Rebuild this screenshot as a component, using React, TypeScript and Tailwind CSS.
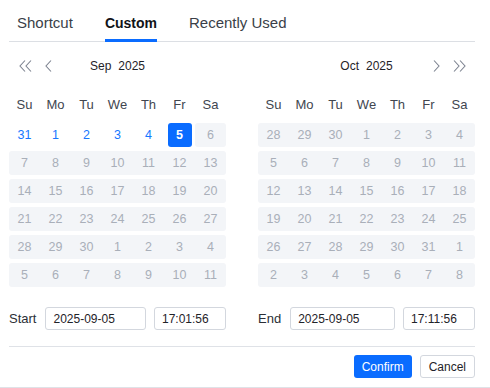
import React from 'react'

type Day = { n: number; disabled: boolean; selected?: boolean }

const sep: Day[][] = [
    [31, 1, 2, 3, 4, 5, 6],
    [7, 8, 9, 10, 11, 12, 13],
    [14, 15, 16, 17, 18, 19, 20],
    [21, 22, 23, 24, 25, 26, 27],
    [28, 29, 30, 1, 2, 3, 4],
    [5, 6, 7, 8, 9, 10, 11],
].map((row, r) => row.map((n, c) => ({ n, disabled: !(r === 0 && c < 6), selected: r === 0 && c === 5 })))

const oct: Day[][] = [
    [28, 29, 30, 1, 2, 3, 4],
    [5, 6, 7, 8, 9, 10, 11],
    [12, 13, 14, 15, 16, 17, 18],
    [19, 20, 21, 22, 23, 24, 25],
    [26, 27, 28, 29, 30, 31, 1],
    [2, 3, 4, 5, 6, 7, 8],
].map((row) => row.map((n) => ({ n, disabled: true })))

const weekdays = ['Su', 'Mo', 'Tu', 'We', 'Th', 'Fr', 'Sa']

function DoubleLeft() {
    return (
        <svg width="13" height="12" viewBox="0 0 13 12" fill="none" stroke="#7d8390" strokeWidth="1.1">
            <path d="M6 0.5L1 6l5 5.5M12 0.5L7 6l5 5.5" />
        </svg>
    )
}

function SingleLeft() {
    return (
        <svg width="7" height="12" viewBox="0 0 7 12" fill="none" stroke="#7d8390" strokeWidth="1.1">
            <path d="M6 0.5L1 6l5 5.5" />
        </svg>
    )
}

function SingleRight() {
    return (
        <svg width="7" height="12" viewBox="0 0 7 12" fill="none" stroke="#7d8390" strokeWidth="1.1">
            <path d="M1 0.5L6 6l-5 5.5" />
        </svg>
    )
}

function DoubleRight() {
    return (
        <svg width="13" height="12" viewBox="0 0 13 12" fill="none" stroke="#7d8390" strokeWidth="1.1">
            <path d="M1 0.5L6 6l-5 5.5M7 0.5L12 6l-5 5.5" />
        </svg>
    )
}

function Calendar({ month, rows, side }: { month: string; rows: Day[][]; side: 'left' | 'right' }) {
    return (
        <div className="w-[217px]">
            <div className="mt-[12px] h-6 grid grid-cols-[1fr_auto_1fr] items-center px-[6px]">
                <div className="flex items-center gap-[3px]">
                    {side === 'left' && (
                        <>
                            <button className="w-5 h-6 flex items-center justify-center"><DoubleLeft /></button>
                            <button className="w-5 h-6 flex items-center justify-center"><SingleLeft /></button>
                        </>
                    )}
                </div>
                <div className="flex gap-[7px] text-[12px] text-[#1f2329]">
                    <span>{month}</span>
                    <span>2025</span>
                </div>
                <div className="flex items-center justify-end gap-[3px]">
                    {side === 'right' && (
                        <>
                            <button className="w-5 h-6 flex items-center justify-center"><SingleRight /></button>
                            <button className="w-5 h-6 flex items-center justify-center"><DoubleRight /></button>
                        </>
                    )}
                </div>
            </div>

            <div className="mt-[15px] h-6 flex text-[13px] text-[#41464f]">
                {weekdays.map((w) => (
                    <div key={w} className="w-[31px] flex items-center justify-center">{w}</div>
                ))}
            </div>

            <div className="mt-[6px] flex flex-col gap-1">
                {rows.map((row, r) => (
                    <div key={r} className="flex h-6 text-[12.5px]">
                        {row.map((d, c) => {
                            const prev = c > 0 && row[c - 1].disabled
                            const next = c < 6 && row[c + 1].disabled
                            if (d.disabled) {
                                return (
                                    <div
                                        key={c}
                                        className={
                                            'w-[31px] flex items-center justify-center bg-[#f3f5f8] text-[#a9afb9] ' +
                                            (prev ? '' : 'rounded-l-[3px] ') +
                                            (next ? '' : 'rounded-r-[3px]')
                                        }
                                    >
                                        {d.n}
                                    </div>
                                )
                            }
                            return (
                                <div key={c} className="w-[31px] flex items-center justify-center">
                                    {d.selected ? (
                                        <span className="w-6 h-6 rounded-[3px] bg-[#0a6cff] text-white font-bold flex items-center justify-center">{d.n}</span>
                                    ) : (
                                        <span className="text-[#1677ff]">{d.n}</span>
                                    )}
                                </div>
                            )
                        })}
                    </div>
                ))}
            </div>
        </div>
    )
}

function TimeRow({ label, date, time }: { label: string; date: string; time: string }) {
    return (
        <div className="w-[217px] flex items-center">
            <span className="text-[13px] text-[#2b2f36] mr-[9px]">{label}</span>
            <div className="flex-1 h-[23px] border border-[#d3d7de] rounded-[3px] pl-[7px] flex items-center text-[12px] text-[#1f2329]">
                {date}
            </div>
            <div className="ml-2 w-[72px] h-[23px] border border-[#d3d7de] rounded-[3px] pl-[7px] flex items-center text-[12px] text-[#1f2329]">
                {time}
            </div>
        </div>
    )
}

export default function App() {
    return (
        <div className="w-[490px] h-[388px] bg-white border-b border-[#dfe2e7] overflow-hidden" style={{ fontFamily: '"Liberation Sans", Arial, sans-serif' }}>
            <div className="ml-[9px] w-[466px]">
                <div className="h-[42px] border-b border-[#dcdfe4] flex gap-8 pl-2 text-[15px]">
                    <div className="pt-[13px] leading-5 text-[#3a3f48]">Shortcut</div>
                    <div className="relative pt-[13px] leading-5 text-[14px] font-bold text-[#111318]">
                        Custom
                        <span className="absolute left-0 right-0 bottom-[-1px] h-[3px] bg-[#0a6cff]" />
                    </div>
                    <div className="pt-[13px] leading-5 text-[#3a3f48]">Recently Used</div>
                </div>

                <div className="flex gap-8">
                    <Calendar month="Sep" rows={sep} side="left" />
                    <Calendar month="Oct" rows={oct} side="right" />
                </div>

                <div className="mt-[20px] flex gap-8">
                    <TimeRow label="Start" date="2025-09-05" time="17:01:56" />
                    <TimeRow label="End" date="2025-09-05" time="17:11:56" />
                </div>

                <div className="mt-4 border-t border-[#dfe2e7]" />

                <div className="mt-2 flex justify-end gap-2">
                    <button className="h-[23px] px-2 rounded-[3px] bg-[#0a6cff] text-white text-[12px]">Confirm</button>
                    <button className="h-[23px] px-2 rounded-[3px] border border-[#d3d7de] bg-white text-[#1f2329] text-[12px]">Cancel</button>
                </div>
            </div>
        </div>
    )
}
